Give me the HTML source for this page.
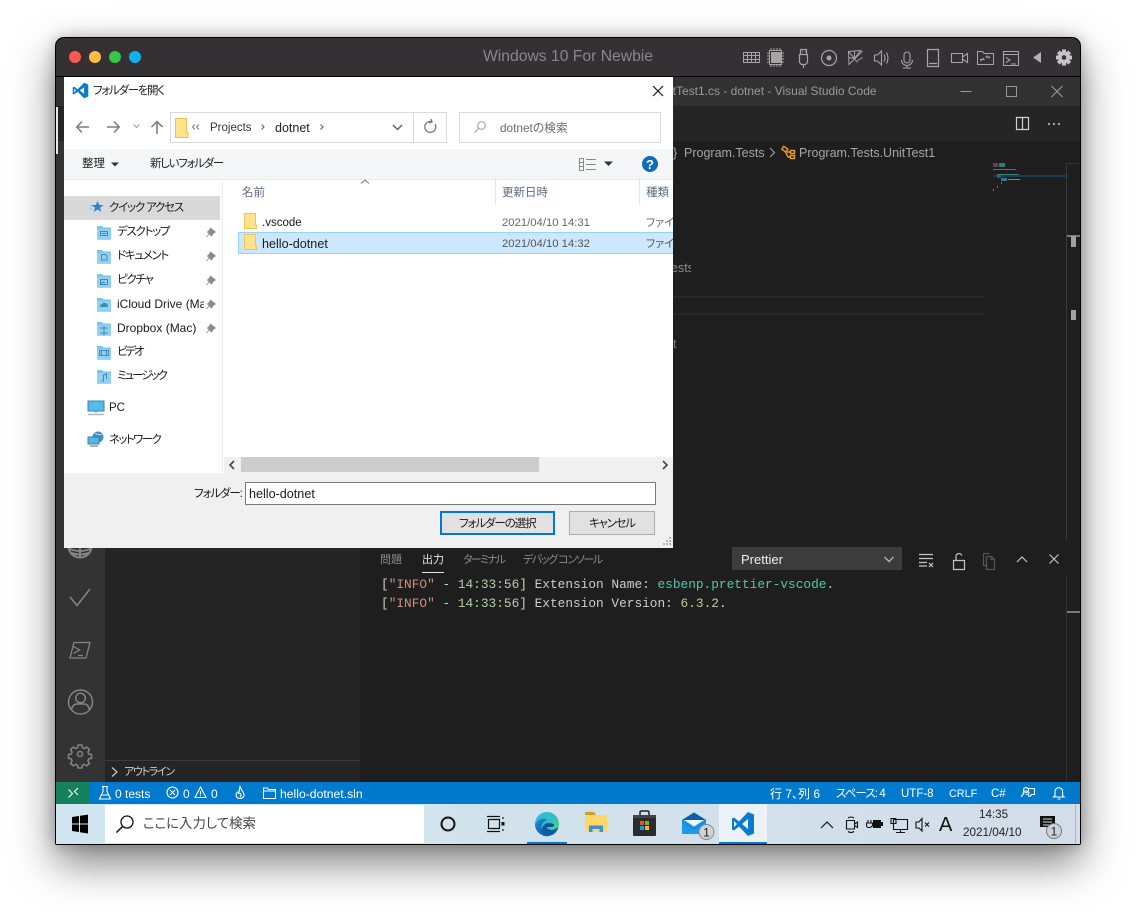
<!DOCTYPE html>
<html lang="ja"><head><meta charset="utf-8"><title>Windows 10 For Newbie</title>
<style>
html,body{margin:0;padding:0;width:1136px;height:918px;overflow:hidden;background:#fff}
body{position:relative;font-family:"Liberation Sans","Noto Sans CJK JP",sans-serif;font-feature-settings:"palt";font-size:12px}
div,svg,span.t{position:absolute}
.t{white-space:nowrap;line-height:16px;height:16px;position:absolute}
svg{overflow:visible;display:block}
.mono{font-family:"Liberation Mono","Noto Sans CJK JP",monospace;font-size:12.8px;white-space:pre;color:#cccccc}
.d{color:#1a1a1a;font-size:11.5px}
.s{color:#fff;font-size:12px}
.ic{fill:none;stroke:#a8a4a6;stroke-width:1}
.w{fill:none;stroke:#fff;stroke-width:1.1}
.a{fill:none;stroke:#858585;stroke-width:1.5}
.g{fill:none;stroke:#c5c5c5;stroke-width:1.2}
.k{fill:none;stroke:#111;stroke-width:1.1}
</style></head><body>

<!-- Window -->
<div style="left:55px;top:37px;width:1026px;height:808px;border-radius:9px 9px 2px 2px;box-shadow:0 18px 42px rgba(0,0,0,.5),0 0 14px rgba(0,0,0,.22);background:#000"></div>
<div style="left:56px;top:38px;width:1024px;height:38px;background:#353033;border-radius:8px 8px 0 0"></div>
<div style="left:69px;top:51px;width:12px;height:12px;border-radius:50%;background:#fc5753"></div>
<div style="left:89px;top:51px;width:12px;height:12px;border-radius:50%;background:#fdbc40"></div>
<div style="left:109px;top:51px;width:12px;height:12px;border-radius:50%;background:#33c748"></div>
<div style="left:129px;top:51px;width:12px;height:12px;border-radius:50%;background:#0fb1ee"></div>
<span class="t" style="left:483px;top:48px;font-size:15.7px;line-height:18px;height:18px;color:#8b8789">Windows 10 For Newbie</span>

<!-- Mac toolbar icons -->
<svg style="left:0;top:0" width="1136" height="80" class="ic">
 <g>
  <path d="M743.5 52.500h16v10h-16z M743.500 55.500h16M743.500 59.500h16M747.500 52.500v10M751.500 52.500v10M755.500 52.500v10"/>
  <rect x="771" y="52" width="10" height="11" fill="#a8a4a6" stroke="none"/>
  <path d="M769.500 50.500h12v14h-12z M771 48v2M774 48v2M777 48v2M780 48v2M771 65v2M774 65v2M777 65v2M780 65v2M767 53h2M767 56h2M767 59h2M767 62h2M782 53h2M782 56h2M782 59h2M782 62h2" stroke-width="1"/>
  <path d="M800.500 49.500h6v5h-6z M799.500 54.500h8v8l-2 2h-4l-2-2z M803.500 65v3M802 51.500h1M805 51.500h1" stroke-width="1.200"/>
  <circle cx="829" cy="58" r="7.500" stroke-width="1.200"/><circle cx="829" cy="58" r="2" fill="#a8a4a6"/>
  <path d="M848.500 51.500l12-1 1.500 1-7 7-6 6z M848.500 51.500l6 7M854.500 50.500l0 8 6-8M848.500 57.500l6 1 3 4M857.500 60.500l5-3"/>
  <path d="M874.500 55v6h3l4 4v-14l-4 4z M884 54.500q2 3.500 0 7M886.500 52.500q3 5.500 0 11" stroke-width="1.100"/>
  <path d="M904 55a3 3 0 0 1 6 0v5a3 3 0 0 1-6 0z M901.500 60a5.500 5.500 0 0 0 11 0M907 65.500v2.500M903 68h8" stroke-width="1.100"/>
  <path d="M927.500 49.500h11v17h-11z M929 63.500h8" stroke-width="1.200"/>
  <path d="M951.500 53.500h11v9h-11z M962.500 57l5-3.500v9l-5-3.500" stroke-width="1.100"/>
  <path d="M977.500 51.500h5l1.500 2h9.500v11h-16z M980 59.500h4l-1.500-1.500M990 57h-4l1.500-1.500M980 59.500l1.500 1.500M990 57l-1.500 1.500" stroke-width="1"/>
  <path d="M1003.500 51.500h15v14h-15z M1003.500 54.500h15M1006 57.500l4 2.500-4 2.500M1011 64h5" stroke-width="1.100"/>
 </g>
 <path d="M1033 57.500l8-5.500v11z" fill="#b4b0b2" stroke="none"/>
 <g transform="translate(1064 57.500)" fill="#c8c4c6" stroke="none">
  <circle r="6"/>
  <g id="gr"><rect x="-2" y="-8" width="4" height="16"/><rect x="-2" y="-8" width="4" height="16" transform="rotate(45)"/><rect x="-2" y="-8" width="4" height="16" transform="rotate(90)"/><rect x="-2" y="-8" width="4" height="16" transform="rotate(135)"/></g>
  <circle r="2.300" fill="#353033"/>
 </g>
</svg>

<!-- VS Code main -->
<div style="left:56px;top:77px;width:1024px;height:29px;background:#323232"></div>
<div style="left:56px;top:106px;width:1024px;height:35px;background:#252526"></div>
<div style="left:56px;top:141px;width:1024px;height:641px;background:#1e1e1e"></div>
<span class="t" style="left:673px;top:83px;font-size:12px;color:#9a9a9a;width:204px;overflow:hidden"><span style="margin-left:-3px">itTest1.cs - dotnet - Visual Studio Code</span></span>
<svg style="left:0;top:0" width="1136" height="180">
 <path d="M960.500 91.500h11" stroke="#9a9a9a" fill="none"/>
 <rect x="1006.500" y="86.500" width="10" height="10" stroke="#9a9a9a" fill="none"/>
 <path d="M1051.500 86l11 11M1062.500 86l-11 11" stroke="#9a9a9a" stroke-width="1.100" fill="none"/>
 <path d="M1016.500 117.500h12v12h-12z M1022.500 117.500v12" stroke="#d0d0d0" stroke-width="1.200" fill="none"/>
 <circle cx="1049" cy="124" r="1" fill="#ccc"/><circle cx="1054" cy="124" r="1" fill="#ccc"/><circle cx="1059" cy="124" r="1" fill="#ccc"/>
 <path d="M770 148l4.500 4.500-4.500 4.500" stroke="#aaa" fill="none"/>
 <g fill="none" stroke="#ee9d28" stroke-width="1.400">
  <rect x="782.500" y="147.500" width="5" height="3.500" transform="rotate(35 785 149)"/>
  <rect x="790.500" y="150.500" width="4" height="3"/>
  <rect x="790.500" y="155.500" width="4" height="3"/>
  <path d="M787 152l3.500 0M785 151l3 6 2.500 0"/>
 </g>
</svg>
<span class="t" style="left:673px;top:145px;font-size:12.500px;color:#a6a6a6">}</span>
<span class="t" style="left:684px;top:145px;font-size:12.500px;color:#a6a6a6">Program.Tests</span>
<span class="t" style="left:799px;top:145px;font-size:12.500px;color:#a6a6a6">Program.Tests.UnitTest1</span>

<!-- editor fragments -->
<span class="t" style="left:673px;top:260px;font-size:12.500px;color:#8c8c8c;width:18px;overflow:hidden"><span style="margin-left:-2px">ests</span></span>
<span class="t" style="left:673px;top:336px;font-size:12.500px;color:#6e7f8a">t</span>
<div style="left:673px;top:296px;width:312px;height:2px;background:#282828"></div>
<div style="left:673px;top:313px;width:312px;height:2px;background:#282828"></div>

<!-- minimap -->
<div style="left:993px;top:163px;width:5px;height:4px;background:#5b3f6d"></div>
<div style="left:999px;top:163px;width:6px;height:4px;background:#3c7a68"></div>
<div style="left:993px;top:169px;width:23px;height:1px;background:#3f7f7a"></div>
<div style="left:997px;top:174px;width:22px;height:1px;background:#3d7f70"></div>
<div style="left:993px;top:175px;width:73px;height:2px;background:#1d3b55"></div>
<div style="left:997px;top:175px;width:4px;height:3px;background:#2c5a86"></div>
<div style="left:1001px;top:178px;width:6px;height:3px;background:#3c7a78"></div>
<div style="left:1008px;top:179px;width:12px;height:1px;background:#8a8a70"></div>
<div style="left:1001px;top:182px;width:1px;height:2px;background:#777"></div>
<div style="left:997px;top:186px;width:1px;height:2px;background:#777"></div>
<div style="left:993px;top:189px;width:1px;height:2px;background:#777"></div>
<div style="left:1066px;top:163px;width:1px;height:377px;background:#3a3a3a"></div>
<div style="left:1066px;top:163px;width:14px;height:1px;background:#333"></div>
<div style="left:1067px;top:235px;width:13px;height:2px;background:#7a7a7a"></div>
<div style="left:1071px;top:236px;width:5px;height:11px;background:#a0a0a0"></div>
<div style="left:1071px;top:310px;width:5px;height:10px;background:#a0a0a0"></div>

<!-- activity bar + sidebar -->
<div style="left:56px;top:141px;width:49px;height:641px;background:#333"></div>
<div style="left:105px;top:141px;width:255px;height:641px;background:#252526"></div>
<div style="left:105px;top:760px;width:255px;height:1px;background:#3b3b3c"></div>
<div style="left:56px;top:107px;width:2px;height:47px;background:#e8e8e8"></div>
<svg style="left:0;top:530px" width="360" height="252">
 <g class="a">
  <circle cx="80" cy="16" r="11.500" stroke-width="2"/>
  <path d="M70 19q10 4 20 0M72 23q8 3 16 0M80 14v13" stroke-width="2"/>
  <path d="M70 67l7 8.500L90 59"/>
  <path d="M74 112.500h16l-4 15.500h-16z M73.500 116.500l6 3.500-6 3.500M78 125.500h5" stroke-width="1.300"/>
  <circle cx="80.500" cy="172" r="12"/>
  <circle cx="80.500" cy="168" r="4.800"/>
  <path d="M71.500 180q1-6 5.500-6h7q4.500 0 5.500 6"/>
  <g transform="translate(80 224) scale(.75)" stroke-width="2">
   <circle r="3.300"/>
   <path d="M-2.500-12h5l.8 3.600 2.600 1.100 3.200-2 3.500 3.500-2 3.200 1.100 2.600 3.600.8v5l-3.600.8-1.100 2.600 2 3.200-3.500 3.500-3.200-2-2.600 1.100-.8 3.600h-5l-.8-3.600-2.600-1.100-3.200 2-3.500-3.500 2-3.200-1.100-2.600-3.600-.8v-5l3.600-.8 1.100-2.600-2-3.200 3.500-3.500 3.200 2 2.600-1.100z"/>
  </g>
 </g>
 <path d="M112 237.500l5 4.500-5 4.500" fill="none" stroke="#ccc" stroke-width="1.200"/>
</svg>
<span class="t" style="left:124px;top:764px;font-size:11px;color:#cfcfcf;letter-spacing:-1.300px">アウトライン</span>

<!-- Bottom panel -->
<span class="t" style="left:380px;top:552px;font-size:11px;color:#8b8b8b">問題</span>
<span class="t" style="left:422px;top:552px;font-size:11px;color:#e7e7e7">出力</span>
<div style="left:422px;top:572px;width:22px;height:1px;background:#e7e7e7"></div>
<span class="t" style="left:463px;top:552px;font-size:11px;color:#8b8b8b;letter-spacing:-1.800px">ターミナル</span>
<span class="t" style="left:523px;top:552px;font-size:11px;color:#8b8b8b;letter-spacing:-1.400px">デバッグ コンソール</span>
<div style="left:732px;top:547px;width:170px;height:23px;background:#3c3c3c"></div>
<span class="t" style="left:741px;top:552px;font-size:13px;color:#f0f0f0">Prettier</span>
<svg style="left:0;top:540px" width="1136" height="40">
 <path d="M884.500 17l4.500 4.500 4.500-4.500" fill="none" stroke="#c5c5c5" stroke-width="1.200"/>
 <g class="g">
  <path d="M919 14.500h14M919 18.500h14M919 22.500h8M919 26h8M929 23l4 4M933 23l-4 4"/>
  <path d="M953.500 20.500h11v9h-11z M956 20.500v-4a3 3 0 0 1 5.800-1"/>
  <g stroke="#555"><path d="M986.500 16.500h5l3 3v10h-8z M983.500 13.500h6M983.500 13.500v12h3M991 16.500v3h3.500"/></g>
  <path d="M1017 22l5-5 5 5"/>
  <path d="M1049.500 14.500l9 9M1058.500 14.500l-9 9"/>
 </g>
</svg>
<div style="left:1066px;top:575px;width:1px;height:207px;background:#333"></div>
<div style="left:1067px;top:611px;width:13px;height:2px;background:#7a7a7a"></div>
<span class="t mono" style="left:381px;top:577px">[<span style="color:#ce9178">"INFO"</span> - <span style="color:#b5cea8">14:33:56</span>] Extension Name: <span style="color:#4ec9b0">esbenp.prettier-vscode</span>.</span>
<span class="t mono" style="left:381px;top:596px">[<span style="color:#ce9178">"INFO"</span> - <span style="color:#b5cea8">14:33:56</span>] Extension Version: <span style="color:#b5cea8">6.3.2</span>.</span>

<!-- Dialog -->
<div style="left:64px;top:77px;width:609px;height:471px;background:#fff"></div>
<svg style="left:72px;top:82px" width="17" height="17" viewBox="0 0 24 24"><path fill="#0a7ccb" fill-rule="evenodd" d="M17 1l-9 9.300L3 6.500 1 7.500v9l2 1 5-3.800L17 23l6-2.500v-17zM17 7.500v9L11 12zM3 9.500L5.500 12 3 14.500z"/></svg>
<span class="t" style="left:93px;top:83px;font-size:11.500px;color:#222;letter-spacing:-1.300px">フォルダーを開く</span>
<svg style="left:0;top:0" width="700" height="200">
 <path d="M653 86l10 10M663 86l-10 10" stroke="#111" stroke-width="1.100" fill="none"/>
 <g fill="none" stroke="#7a7a7a" stroke-width="1.500">
  <path d="M77 127h12M82 121.500L76.800 127 82 132.500"/>
  <path d="M107 127h12M114 121.500l5.200 5.500-5.200 5.500"/>
  <path d="M133.500 124.500l3 3 3-3" stroke-width="1" stroke="#999"/>
  <path d="M157 134v-12M151.500 127l5.500-5.500 5.500 5.500"/>
 </g>
 <path d="M175.500 118.500h11v14h1.500v5h-12.500z" fill="#fde48c" stroke="#e9c34f"/>
 <path d="M195 124.500l-2.500 2.500 2.500 2.500M199 124.500l-2.500 2.500 2.500 2.500" fill="none" stroke="#777"/>
 <path d="M261.500 124.500l2.500 2.500-2.500 2.500M320.500 124.500l2.500 2.500-2.500 2.500" fill="none" stroke="#666" stroke-width="1.100"/>
 <path d="M393 125l4.500 4.500 4.500-4.500" fill="none" stroke="#666" stroke-width="1.500"/>
 <path d="M435 124a5.500 5.500 0 1 1-3.500-2.500M431 119l1 3-3 1" fill="none" stroke="#777" stroke-width="1.300"/>
 <circle cx="481.500" cy="125.500" r="3.800" fill="none" stroke="#999"/><path d="M478.500 128.500l-4 4" stroke="#999"/>
</svg>
<div style="left:170px;top:112px;width:275px;height:29px;border:1px solid #d9d9d9"></div>
<div style="left:413px;top:113px;width:1px;height:29px;background:#d9d9d9"></div>
<div style="left:459px;top:112px;width:200px;height:29px;border:1px solid #d9d9d9"></div>
<span class="t d" style="left:210px;top:120px;color:#333">Projects</span>
<span class="t" style="left:275px;top:120px;color:#222;font-size:12.500px">dotnet</span>
<span class="t" style="left:500px;top:120px;font-size:11.800px;color:#6d6d6d">dotnetの検索</span>

<div style="left:64px;top:149px;width:609px;height:30px;background:#f5f6f7"></div>
<div style="left:64px;top:179px;width:609px;height:1px;background:#eaeaea"></div>
<span class="t" style="left:82px;top:156px;font-size:11.500px;color:#222">整理</span>
<span class="t" style="left:150px;top:156px;font-size:11.500px;color:#222;letter-spacing:-1.300px">新しいフォルダー</span>
<svg style="left:0;top:140px" width="700" height="50">
 <path d="M111 22.500h8l-4 4z" fill="#333"/>
 <path d="M604 21.500h9l-4.500 4.500z" fill="#333"/>
 <g fill="none" stroke="#888"><path d="M579.500 18.500h4v12h-4zM579.500 22.500h4M579.500 26.500h4M586 19.500h10M586 24.500h10M586 29.500h10"/></g>
 <circle cx="650" cy="24" r="8" fill="#0f6cbd"/>
 <text x="650" y="29" font-family="Liberation Sans" font-size="13" font-weight="700" fill="#fff" text-anchor="middle">?</text>
 <path d="M361 43.500l4-3.500 4 3.500" fill="none" stroke="#777"/>
</svg>

<!-- dialog sidebar -->
<div style="left:64px;top:196px;width:156px;height:24px;background:#d9d9d9"></div>
<div style="left:222px;top:180px;width:1px;height:293px;background:#efefef"></div>
<svg style="left:0;top:0" width="240" height="460">
 <path d="M97.500 201l1.700 4h4.300l-3.400 2.700 1.200 4.300-3.800-2.500-3.800 2.500 1.200-4.300-3.400-2.700h4.300z" fill="#2a86d8"/>
 <path d="M90 206h3M90 209h2" stroke="#7ab8ea"/>
 <defs>
  <g id="fo"><path d="M0 1h5l1.500 1.500H14V14H0z" fill="#7cc4e8"/><path d="M0 4h14v10H0z" fill="#92d2f0"/><path d="M0 14h14v1H0z" fill="#c8c8c8"/></g>
  <g id="pin"><path d="M4 1l5 4-2 1-2 3-4-4 2-2zM2.500 7L0 10" fill="#8a8a8a" stroke="#8a8a8a" stroke-width=".8"/></g>
 </defs>
 <use href="#fo" x="97" y="225"/><path d="M100.500 231.500h7v4h-7zM102 233.500h4" fill="none" stroke="#3a8dbb"/>
 <use href="#fo" x="97" y="249"/><path d="M101.500 254.500h4l1.500 1.500v4h-5.500z" fill="none" stroke="#3a8dbb"/>
 <use href="#fo" x="97" y="273"/><path d="M100.500 279.500h7v5h-7zM101 284l2-2 2 1" fill="none" stroke="#3a8dbb"/>
 <use href="#fo" x="97" y="297"/><path d="M100 307q0-3 2-3 1-2 3-1 3 0 3 4z" fill="#3a8dbb"/>
 <use href="#fo" x="97" y="321"/><path d="M104 326v9M100 328h8M100 333h8" stroke="#3a8dbb"/>
 <use href="#fo" x="97" y="345"/><path d="M99.500 350.500h9v5h-9zM101.500 350.500v5M106.500 350.500v5" fill="none" stroke="#3a8dbb"/>
 <use href="#fo" x="97" y="369"/><path d="M103.500 381v-6l3-1v5M103.500 381h-2" fill="none" stroke="#3a8dbb"/>
 <use href="#pin" x="206.500" y="227"/><use href="#pin" x="206.500" y="251"/><use href="#pin" x="206.500" y="275"/><use href="#pin" x="206.500" y="299"/><use href="#pin" x="206.500" y="323"/>
 <rect x="88" y="401" width="16" height="10" fill="#53bdf0" stroke="#4a7ea6"/>
 <path d="M88 414.500h16" stroke="#aab4bc" stroke-width="1.500"/><path d="M94 412h4" stroke="#8da" />
 <circle cx="98" cy="437" r="5.500" fill="#3d8fc4"/><path d="M95 433q4 3 7 1" stroke="#bfe0f0" fill="none"/>
 <rect x="88" y="437" width="11" height="7" fill="#4fb6e8" stroke="#3a7fa8"/>
 <path d="M90 446h8" stroke="#888" stroke-width="1.300"/>
</svg>
<span class="t d" style="left:109px;top:200px;letter-spacing:-1.200px">クイック アクセス</span>
<span class="t d" style="left:117px;top:224px;letter-spacing:-1.300px">デスクトップ</span>
<span class="t d" style="left:117px;top:248px;letter-spacing:-1.300px">ドキュメント</span>
<span class="t d" style="left:117px;top:272px;letter-spacing:-1.300px">ピクチャ</span>
<span class="t" style="left:117px;top:296px;width:87px;overflow:hidden;font-size:12px;color:#1a1a1a">iCloud Drive (Mac)</span>
<span class="t" style="left:117px;top:320px;font-size:12px;color:#1a1a1a">Dropbox (Mac)</span>
<span class="t d" style="left:117px;top:344px;letter-spacing:-2.200px">ビデオ</span>
<span class="t d" style="left:117px;top:368px;letter-spacing:-2px">ミュージック</span>
<span class="t d" style="left:109px;top:400px">PC</span>
<span class="t d" style="left:109px;top:432px;letter-spacing:-1.600px">ネットワーク</span>

<!-- file list -->
<span class="t" style="left:242px;top:185px;font-size:11.500px;color:#5a6b7d">名前</span>
<span class="t" style="left:502px;top:185px;font-size:11.500px;color:#5a6b7d">更新日時</span>
<span class="t" style="left:646px;top:185px;font-size:11.500px;color:#5a6b7d">種類</span>
<div style="left:495px;top:180px;width:1px;height:25px;background:#e5e5e5"></div>
<div style="left:639px;top:180px;width:1px;height:25px;background:#e5e5e5"></div>
<div style="left:238px;top:232px;width:434px;height:20px;background:#cce8ff;border:1px solid #99d1ff;border-right:none"></div>
<svg style="left:0;top:0" width="300" height="260">
 <path d="M244.500 213.500h11v11.500h1v3.500h-12z" fill="#fde48c" stroke="#eec659"/>
 <path d="M244.500 234.500h11v11.500h1v3.500h-12z" fill="#fde48c" stroke="#eec659"/>
</svg>
<span class="t d" style="left:262px;top:215px">.vscode</span>
<span class="t" style="left:262px;top:236px;font-size:12.600px;color:#1a1a1a">hello-dotnet</span>
<span class="t" style="left:502px;top:215px;font-size:11.300px;color:#666">2021/04/10 14:31</span>
<span class="t" style="left:502px;top:236px;font-size:11.300px;color:#555">2021/04/10 14:32</span>
<span class="t" style="left:646px;top:215px;font-size:11px;color:#666;width:27px;overflow:hidden">ファイル</span>
<span class="t" style="left:646px;top:236px;font-size:11px;color:#555;width:27px;overflow:hidden">ファイル</span>

<!-- scrollbar -->
<div style="left:224px;top:457px;width:449px;height:16px;background:#f0f0f0"></div>
<div style="left:241px;top:457px;width:298px;height:15px;background:#cdcdcd"></div>
<svg style="left:0;top:450px" width="700" height="30">
 <path d="M234 11l-4 4 4 4M663 11l4 4-4 4" fill="none" stroke="#444" stroke-width="1.600"/>
</svg>

<!-- bottom dialog -->
<div style="left:64px;top:473px;width:609px;height:75px;background:#f0f0f0"></div>
<span class="t d" style="left:194px;top:486px;letter-spacing:-1.100px">フォルダー:</span>
<div style="left:245px;top:482px;width:409px;height:21px;background:#fff;border:1px solid #7a7a7a"></div>
<span class="t" style="left:249px;top:486px;font-size:12.600px;color:#1a1a1a">hello-dotnet</span>
<div style="left:440px;top:511px;width:111px;height:20px;background:#e1e1e1;border:2px solid #0078d7"></div>
<span class="t d" style="left:459px;top:516px;letter-spacing:-1.100px">フォルダーの選択</span>
<div style="left:569px;top:511px;width:84px;height:22px;background:#e1e1e1;border:1px solid #adadad"></div>
<span class="t d" style="left:589px;top:516px;letter-spacing:-1.300px">キャンセル</span>
<svg style="left:660px;top:535px" width="13" height="13"><path fill="#b5b5b5" d="M9 2h2v2H9zM6 5h2v2H6zM9 5h2v2H9zM3 8h2v2H3zM6 8h2v2H6zM9 8h2v2H9z"/></svg>

<!-- Status bar -->
<div style="left:56px;top:782px;width:1024px;height:22px;background:#007acc"></div>
<div style="left:56px;top:782px;width:34px;height:22px;background:#16825d"></div>
<svg style="left:0;top:780px" width="1136" height="26" class="w">
 <path d="M68.500 17.500l4-4-4-4M78 8l-3.500 3.500L78 15"/>
 <path d="M102 6.500h6M103 6.500v5l-3.500 7.500h11L107 11.500v-5M101.500 15h7"/>
 <circle cx="172.500" cy="12.500" r="5.500"/><path d="M170 10l5 5M175 10l-5 5"/>
 <path d="M200.500 7l5.500 10.500h-11zM200.500 11v3.500M200.500 15.500v1"/>
 <path d="M240 6.500q1 3 3 5.500 2 3 0 5.500-3 2-6 0-2-3 .5-5.500.5 1 1.500 1.500 0-3.500 1-7zM240 13q2 2 0 4"/>
 <path d="M263.500 8h4l1 1.500h7v9h-12zM263.500 11h12"/>
 <path d="M1023 15q0-3 3-3t3 3M1021.500 18q.5-3 3-3M1029 18q0-3-3-3M1026.500 9.500h8v6h-3l-1.500 2" transform="translate(0 -1)"/>
 <circle cx="1026" cy="10" r="2.500"/>
 <path d="M1055 15.500v-4a3.800 3.800 0 0 1 7.600 0v4l1.500 1.500h-10.600zM1057.500 19h3"/>
</svg>
<span class="t s" style="left:115px;top:786px">0 tests</span>
<span class="t s" style="left:183px;top:786px">0</span>
<span class="t s" style="left:211px;top:786px">0</span>
<span class="t s" style="left:280px;top:786px;font-size:12.200px">hello-dotnet.sln</span>
<span class="t s" style="left:770px;top:786px;font-size:12px">行 7、列 6</span>
<span class="t s" style="left:836px;top:786px;font-size:11.500px;letter-spacing:-.9px">スペース: 4</span>
<span class="t s" style="left:901px;top:786px;font-size:11.500px">UTF-8</span>
<span class="t s" style="left:949px;top:786px;font-size:10.800px">CRLF</span>
<span class="t s" style="left:991px;top:786px;font-size:11.500px">C#</span>

<!-- Taskbar -->
<div style="left:56px;top:804px;width:1024px;height:40px;background:linear-gradient(90deg,#cfe5ef 0%,#d2e2ec 50%,#d3dce9 100%)"></div>
<div style="left:105px;top:805px;width:319px;height:38px;background:#fff"></div>
<div style="left:719px;top:804px;width:48px;height:40px;background:#ebf2f8"></div>
<div style="left:527px;top:842px;width:40px;height:2px;background:#0078d4"></div>
<div style="left:719px;top:842px;width:48px;height:2px;background:#0078d4"></div>
<div style="left:1075px;top:804px;width:1px;height:40px;background:#aeb8c0"></div>
<span class="t" style="left:143px;top:816px;font-size:13.400px;color:#444">ここに入力して検索</span>
<svg style="left:0;top:800px" width="1136" height="46">
 <g fill="#000"><path d="M72 17l7-1v7.500h-7zM80 15.800l8-1.200V23.500h-8zM72 24.500h7V32l-7-1zM80 24.500h8v9l-8-1.200z"/></g>
 <circle cx="127" cy="22" r="6" fill="none" stroke="#111" stroke-width="1.300"/><path d="M122.500 26.500l-6 6" stroke="#111" stroke-width="1.500"/>
 <circle cx="448" cy="24" r="6.500" fill="none" stroke="#111" stroke-width="2"/>
 <g fill="none" stroke="#111" stroke-width="1.200"><path d="M488.500 19.500h11v9h-11zM487 16.500h13M487 31.500h13M503 17v2M503 29v2"/></g><rect x="501.500" y="22" width="3" height="3.500" fill="#111"/>
 <!-- edge -->
 <defs>
  <linearGradient id="eg" x1="0" y1="0" x2="1" y2="1"><stop offset="0" stop-color="#2fb9e0"/><stop offset=".55" stop-color="#2fc1c0"/><stop offset="1" stop-color="#6fdc55"/></linearGradient>
  <linearGradient id="eb" x1="0" y1="0" x2="1" y2="1"><stop offset="0" stop-color="#1f8fd8"/><stop offset="1" stop-color="#0b4ea0"/></linearGradient>
 </defs>
 <circle cx="547" cy="24" r="12" fill="url(#eg)"/>
 <path d="M535 24a12 12 0 0 0 16 11.500q-8 .5-9.500-6.500-1-6 5.500-9-6-4-12 4z" fill="url(#eb)"/>
 <path d="M558.500 27q-2 7-8 8.500-7 .5-9-5.500 1-6 7-7.500-3 3-1 6 4 3.500 11-1.500z" fill="#0d5aa9"/>
 <path d="M546 24q5-2 8 .5.500 2-2 2.500h-6q-1-1 0-3z" fill="#0f4f9c"/>
 <!-- explorer -->
 <path d="M585 12h9l2 3h-11z" fill="#d49c25"/>
 <path d="M585 15h22v17h-22z" fill="#fcd966"/>
 <path d="M589 32v-6.500h14V32h-3.500v-3h-7v3z" fill="#3d8fd6"/>
 <!-- store -->
 <path d="M640 15v-2.500q0-1.500 1.500-1.500h6q1.500 0 1.500 1.500V15" fill="none" stroke="#222" stroke-width="1.500"/>
 <path d="M633 15h23v20a1 1 0 0 1-1 1h-21a1 1 0 0 1-1-1z" fill="#2b2b2b"/>
 <path d="M633 15h23v3h-23z" fill="#444"/>
 <rect x="640" y="21" width="4" height="4" fill="#f25022"/><rect x="645" y="21" width="4" height="4" fill="#7fba00"/><rect x="640" y="26" width="4" height="4" fill="#00a4ef"/><rect x="645" y="26" width="4" height="4" fill="#ffb900"/>
 <!-- mail -->
 <path d="M682 20l12-7.500L706 20v14h-24z" fill="#1e9be6"/>
 <path d="M682 20l12-7.500L706 20z" fill="#0b5fa8"/>
 <path d="M684 20h20l-10 6.500z" fill="#f0f6fb"/>
 <path d="M682 20l12 8 12-8v2l-12 8-12-8z" fill="#0f78cc" opacity=".5"/>
 <circle cx="706.500" cy="32" r="7.500" fill="#cdd3d7" stroke="#888"/>
 <text x="706.500" y="36.500" font-family="Liberation Sans" font-size="12" fill="#222" text-anchor="middle">1</text>
 <!-- vscode -->
 <g transform="translate(731 12) scale(1)"><path fill="#0a7ccb" fill-rule="evenodd" d="M17 0l-9 9.500L3 5.500 1 6.500v11l2 1 5-4L17 24l6-2.500v-19zM17 7v10l-6-5zM3 9l3 3-3 3z"/></g>
 <!-- tray -->
 <path d="M821 28l6-6 6 6" fill="none" stroke="#111" stroke-width="1.200"/>
 <g fill="none" stroke="#111" stroke-width="1.100">
  <path d="M846.500 20.500h8v8.500h-8zM854.500 24l3-2v5.500l-3-2M848 18q3-2 6 0M848 31.500q3 2 6 0"/>
  <path d="M868 20v2.500M871 20v2.500M866.500 23h6v2q0 2-3 2.500t-3-2.500z"/>
  <path d="M893.500 19.500h14v10h-14zM900.500 29.500v3M896 32.500h9M891 18.500h5v5h-5z"/>
  <path d="M916 22v6h3l3 3V18.500l-3 3.500zM925 22.500l4 4M929 22.500l-4 4"/>
 </g>
 <path d="M873 20h8v8h-8z" fill="#111"/><path d="M881 22h2v4h-2z" fill="#111"/>
 <path d="M1040 16h15v11h-5l-3 3v-3h-7z" fill="#111"/>
 <path d="M1043 19h9M1043 22h9M1043 25h6" stroke="#d3dce9"/>
 <circle cx="1054" cy="31" r="7.500" fill="#cdd3d7" stroke="#777"/>
 <text x="1054" y="35.500" font-family="Liberation Sans" font-size="12" fill="#222" text-anchor="middle">1</text>
</svg>
<span class="t" style="left:939px;top:817px;font-size:20px;color:#111">A</span>
<span class="t" style="left:979px;top:807px;font-size:11.600px;color:#222">14:35</span>
<span class="t" style="left:963px;top:825px;font-size:11.700px;color:#222">2021/04/10</span>
</body></html>
